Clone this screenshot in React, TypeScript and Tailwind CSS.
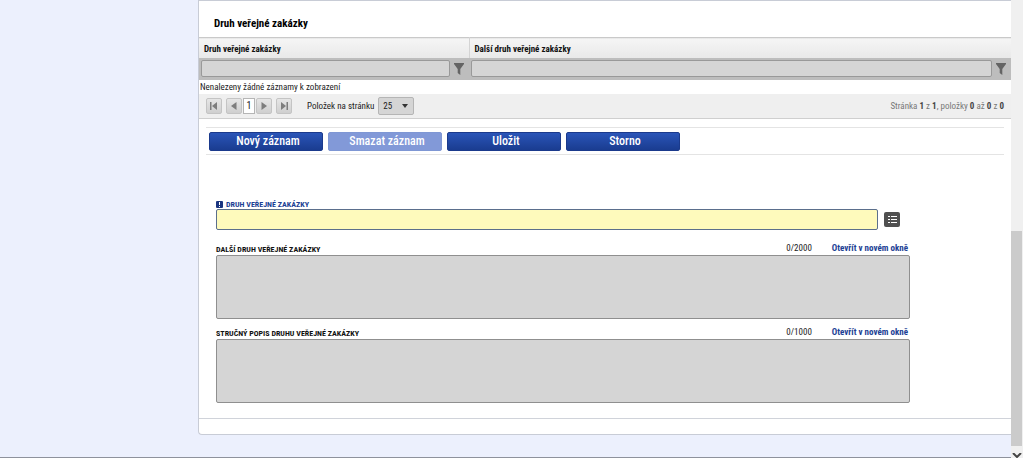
import { useState } from 'react';

interface TextAreaFieldProps {
  id: string;
  label: string;
  max: number;
}

const toolbarButtons = [
  { label: 'Nový záznam', disabled: false },
  { label: 'Smazat záznam', disabled: true },
  { label: 'Uložit', disabled: false },
  { label: 'Storno', disabled: false },
];

const columns = ['Druh veřejné zakázky', 'Další druh veřejné zakázky'];

function FilterIcon() {
  return (
    <svg viewBox="0 0 10 12" className="h-3 w-2.5" fill="#646464" aria-hidden="true">
      <path d="M0 0h10v1L6.3 6v6L3.7 10V6L0 1z" />
    </svg>
  );
}

function PagerButton({ label, path }: { label: string; path: string }) {
  return (
    <button
      type="button"
      aria-label={label}
      className="flex h-4 w-4 items-center justify-center rounded-xs border border-[#c4c4c4] bg-linear-to-b from-[#e6e6e6] to-[#cfcfcf]"
    >
      <svg viewBox="0 0 8 8" className="h-2 w-2" fill="#7d7d7d" aria-hidden="true">
        <path d={path} />
      </svg>
    </button>
  );
}

function TextAreaField({ id, label, max }: TextAreaFieldProps) {
  const [value, setValue] = useState('');

  return (
    <div className="flex flex-col">
      <div className="flex h-4 items-center pt-0.5 pr-0.5">
        <label htmlFor={id} className="flex-1 pt-1 text-[8px] leading-3 font-bold text-[#111] uppercase">
          {label}
        </label>
        <span className="mr-5 text-[9px] leading-3 text-[#222]">
          {value.length}/{max}
        </span>
        <a href="#" className="text-[9px] leading-3 font-bold text-[#1c3f94]">
          Otevřít v novém okně
        </a>
      </div>
      <textarea
        id={id}
        value={value}
        maxLength={max}
        onChange={(e) => setValue(e.target.value)}
        className="block h-16 w-full resize-none rounded-xs border border-[#8f8f8f] bg-[#d5d5d5] p-1 text-[10px]"
      />
    </div>
  );
}

function RecordsGrid() {
  return (
    <section>
      <h2 className="flex h-9 items-center pt-2.5 pl-[15px] text-[11px] leading-4 font-bold text-black">
        Druh veřejné zakázky
      </h2>
      <table className="w-full table-fixed border-collapse">
        <colgroup>
          <col className="w-[270px]" />
          <col />
        </colgroup>
        <thead>
          <tr className="h-5 border-t border-[#c9c9c9] bg-linear-to-b from-[#f5f5f5] to-[#e9e9e9]">
            {columns.map((column) => (
              <th
                key={column}
                scope="col"
                className="border-r border-[#d4d4d4] px-[5px] pt-0.5 pb-0 text-left text-[9px] leading-3 font-bold text-[#111] last:border-r-0"
              >
                {column}
              </th>
            ))}
          </tr>
          <tr className="h-[22px] bg-[#bdbdbd]">
            {columns.map((column) => (
              <td key={column} className="p-0">
                <div className="flex items-center gap-1 pr-[5px] pl-0.5">
                  <input
                    type="text"
                    aria-label={`Filtr: ${column}`}
                    className="h-[17px] min-w-0 flex-1 rounded-xs border border-[#999] bg-[#d5d5d5] px-1 text-[9px]"
                  />
                  <button type="button" aria-label={`Filtrovat: ${column}`}>
                    <FilterIcon />
                  </button>
                </div>
              </td>
            ))}
          </tr>
        </thead>
        <tbody>
          <tr>
            <td colSpan={2} className="h-3.5 px-px py-0 text-[9px] leading-3 text-[#222]">
              Nenalezeny žádné záznamy k zobrazení
            </td>
          </tr>
        </tbody>
      </table>

      {/* Pager */}
      <div className="flex h-[25px] items-center border-b border-[#cfcfcf] bg-[#efefef] px-[7px] text-[9px] leading-3 text-[#222]">
        <div className="flex items-center">
          <PagerButton label="První stránka" path="M0 0h1.5v8H0zM7 0v8L2 4z" />
          <span className="w-1" />
          <PagerButton label="Předchozí stránka" path="M6.5 0v8L1 4z" />
          <span className="mx-px flex h-4 w-3 items-center justify-center border border-[#b5b5b5] bg-white text-[10px]">
            1
          </span>
          <PagerButton label="Další stránka" path="M1.5 0v8L7 4z" />
          <span className="w-1" />
          <PagerButton label="Poslední stránka" path="M6.5 0H8v8H6.5zM1 0v8l5-4z" />
        </div>
        <label htmlFor="page-size" className="ml-[15px]">
          Položek na stránku
        </label>
        <div className="relative ml-1">
          <select
            id="page-size"
            className="block h-[18px] w-9 appearance-none rounded-xs border border-[#b5b5b5] bg-[#d5d5d5] pl-1 text-[9px] leading-3"
          >
            <option>25</option>
            <option>50</option>
            <option>100</option>
          </select>
          <svg viewBox="0 0 6 4" className="pointer-events-none absolute top-[7px] right-1.5 h-1 w-1.5" fill="#333" aria-hidden="true">
            <path d="M0 0h6L3 4z" />
          </svg>
        </div>
        <p className="ml-auto text-[#777] [&>b]:text-[#444]">
          Stránka <b>1</b> z <b>1</b>, položky <b>0</b> až <b>0</b> z <b>0</b>
        </p>
      </div>
    </section>
  );
}

function ScrollRail() {
  return (
    <div className="flex w-3 shrink-0 flex-col bg-[#f0f0f0] pr-px" aria-hidden="true">
      <div className="flex-[231]" />
      <div className="flex-[215] bg-[#cbcbcb]" />
      <div className="flex h-3 items-end justify-center overflow-hidden">
        <svg viewBox="0 0 10 5" className="h-[5px] w-2.5" fill="none" stroke="#444" strokeWidth="2">
          <path d="M1 0l4 4 4-4" />
        </svg>
      </div>
    </div>
  );
}

export default function App() {
  return (
    <div className="flex min-h-screen bg-[#ecf0fd] font-['Roboto_Condensed','Liberation_Sans_Narrow',Roboto,sans-serif]">
      <main className="min-w-0 flex-1 border-b border-[#8e929c] pl-[198px]">
        <div className="rounded-bl-sm border-y border-l border-[#c8ccd6] bg-white">
          <RecordsGrid />

          {/* Record actions */}
          <div className="mx-[7px] mt-2 flex h-7 items-center gap-[5px] border-y border-[#e4e4e4] pt-px pl-[3px]">
            {toolbarButtons.map(({ label, disabled }) => (
              <button
                key={label}
                type="button"
                disabled={disabled}
                className="h-[19px] w-[114px] rounded-xs border border-[#1b3a8c] bg-linear-to-b from-[#2a55b8] to-[#1a3c90] pl-1 text-[12px] leading-4 font-medium text-white disabled:border-[#7f97d4] disabled:bg-[#8299d8] disabled:bg-none"
              >
                {label}
              </button>
            ))}
          </div>

          {/* Record detail */}
          <form className="mt-[46px] mr-[101px] ml-[17px] flex flex-col gap-1 pb-[15px]">
            <div className="mb-[5px]">
              <label
                htmlFor="procurement-type"
                className="flex items-center gap-[3px] text-[8px] leading-2 font-bold text-[#1c3f94] uppercase"
              >
                <svg viewBox="0 0 7 7" className="h-[7px] w-[7px]" aria-hidden="true">
                  <rect width="7" height="7" rx="1" fill="#1b3580" />
                  <path d="M3 1h1v3H3zM3 5h1v1H3z" fill="#fff" />
                </svg>
                Druh veřejné zakázky
              </label>
              <div className="flex items-center gap-1.5 pr-2.5">
                <input
                  id="procurement-type"
                  type="text"
                  className="h-[21px] min-w-0 flex-1 rounded-xs border border-[#5b6f8c] bg-[#fefabc] px-1 text-[10px]"
                />
                <button
                  type="button"
                  aria-label="Vybrat ze seznamu"
                  className="flex h-[15px] w-4 items-center justify-center rounded-xs bg-[#505050]"
                >
                  <svg viewBox="0 0 9 9" className="h-[9px] w-[9px]" fill="#fff" aria-hidden="true">
                    <path d="M0 1h2v1H0zM3 1h6v1H3zM0 4h2v1H0zM3 4h6v1H3zM0 7h2v1H0zM3 7h6v1H3z" />
                  </svg>
                </button>
              </div>
            </div>
            <TextAreaField id="other-type" label="Další druh veřejné zakázky" max={2000} />
            <TextAreaField id="short-description" label="Stručný popis druhu veřejné zakázky" max={1000} />
          </form>
          <div className="h-4 border-t border-[#d0d3da]" />
        </div>
      </main>
      <ScrollRail />
    </div>
  );
}
